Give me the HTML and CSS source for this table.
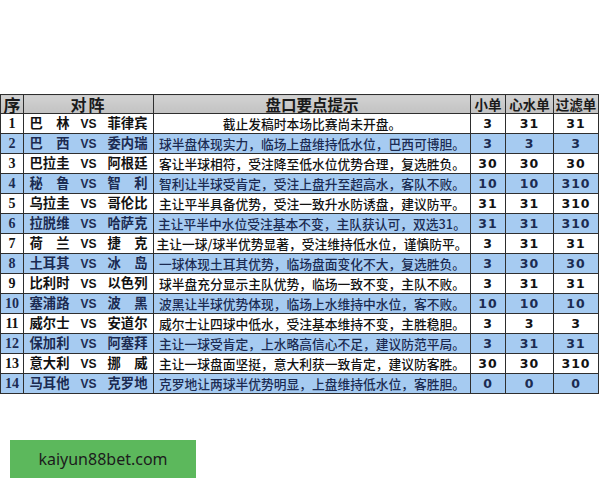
FILE: index.html
```html
<!DOCTYPE html>
<html lang="zh">
<head>
<meta charset="utf-8">
<link rel="stylesheet" href="styles.css">
</head>
<body>
<main class="page">
  <table class="odds">
    <colgroup>
      <col class="c-no"><col class="c-match"><col class="c-tip"><col class="c-n1"><col class="c-n2"><col class="c-n3">
    </colgroup>
    <thead>
      <tr>
        <th class="h-no">序</th>
        <th class="h-match">对阵</th>
        <th class="h-tip">盘口要点提示</th>
        <th class="h-small">小单</th>
        <th class="h-small">心水单</th>
        <th class="h-small">过滤单</th>
      </tr>
    </thead>
    <tbody>
      <tr><td class="no">1</td><td class="match"><span class="t1">巴　林</span><span class="vs">VS</span><span class="t2">菲律宾</span></td><td class="tip">截止发稿时本场比赛尚未开盘。</td><td class="num">3</td><td class="num">31</td><td class="num">31</td></tr>
      <tr class="blue"><td class="no">2</td><td class="match"><span class="t1">巴　西</span><span class="vs">VS</span><span class="t2">委内瑞</span></td><td class="tip">球半盘体现实力，临场上盘维持低水位，巴西可博胆。</td><td class="num">3</td><td class="num">3</td><td class="num">3</td></tr>
      <tr><td class="no">3</td><td class="match"><span class="t1">巴拉圭</span><span class="vs">VS</span><span class="t2">阿根廷</span></td><td class="tip">客让半球相符，受注降至低水位优势合理，复选胜负。</td><td class="num">30</td><td class="num">30</td><td class="num">30</td></tr>
      <tr class="blue"><td class="no">4</td><td class="match"><span class="t1">秘　鲁</span><span class="vs">VS</span><span class="t2">智　利</span></td><td class="tip">智利让半球受肯定，受注上盘升至超高水，客队不败。</td><td class="num">10</td><td class="num">10</td><td class="num">310</td></tr>
      <tr><td class="no">5</td><td class="match"><span class="t1">乌拉圭</span><span class="vs">VS</span><span class="t2">哥伦比</span></td><td class="tip">主让平半具备优势，受注一致升水防诱盘，建议防平。</td><td class="num">31</td><td class="num">31</td><td class="num">310</td></tr>
      <tr class="blue"><td class="no">6</td><td class="match"><span class="t1">拉脱维</span><span class="vs">VS</span><span class="t2">哈萨克</span></td><td class="tip">主让平半中水位受注基本不变，主队获认可，双选31。</td><td class="num">31</td><td class="num">31</td><td class="num">310</td></tr>
      <tr><td class="no">7</td><td class="match"><span class="t1">荷　兰</span><span class="vs">VS</span><span class="t2">捷　克</span></td><td class="tip">主让一球/球半优势显著，受注维持低水位，谨慎防平。</td><td class="num">3</td><td class="num">31</td><td class="num">31</td></tr>
      <tr class="blue"><td class="no">8</td><td class="match"><span class="t1">土耳其</span><span class="vs">VS</span><span class="t2">冰　岛</span></td><td class="tip">一球体现土耳其优势，临场盘面变化不大，复选胜负。</td><td class="num">3</td><td class="num">30</td><td class="num">30</td></tr>
      <tr><td class="no">9</td><td class="match"><span class="t1">比利时</span><span class="vs">VS</span><span class="t2">以色列</span></td><td class="tip">球半盘充分显示主队优势，临场一致不变，主队不败。</td><td class="num">3</td><td class="num">31</td><td class="num">31</td></tr>
      <tr class="blue"><td class="no">10</td><td class="match"><span class="t1">塞浦路</span><span class="vs">VS</span><span class="t2">波　黑</span></td><td class="tip">波黑让半球优势体现，临场上水维持中水位，客不败。</td><td class="num">10</td><td class="num">10</td><td class="num">10</td></tr>
      <tr><td class="no">11</td><td class="match"><span class="t1">威尔士</span><span class="vs">VS</span><span class="t2">安道尔</span></td><td class="tip">威尔士让四球中低水，受注基本维持不变，主胜稳胆。</td><td class="num">3</td><td class="num">3</td><td class="num">3</td></tr>
      <tr class="blue"><td class="no">12</td><td class="match"><span class="t1">保加利</span><span class="vs">VS</span><span class="t2">阿塞拜</span></td><td class="tip">主让一球受肯定，上水略高信心不足，建议防范平局。</td><td class="num">3</td><td class="num">31</td><td class="num">31</td></tr>
      <tr><td class="no">13</td><td class="match"><span class="t1">意大利</span><span class="vs">VS</span><span class="t2">挪　威</span></td><td class="tip">主让一球盘面坚挺，意大利获一致肯定，建议防客胜。</td><td class="num">30</td><td class="num">30</td><td class="num">310</td></tr>
      <tr class="blue"><td class="no">14</td><td class="match"><span class="t1">马耳他</span><span class="vs">VS</span><span class="t2">克罗地</span></td><td class="tip">克罗地让两球半优势明显，上盘维持低水位，客胜胆。</td><td class="num">0</td><td class="num">0</td><td class="num">0</td></tr>
    </tbody>
  </table>
  <div class="badge">kaiyun88bet.com</div>
</main>
</body>
</html>
```

FILE: styles.css
```css
html, body {
  margin: 0;
  padding: 0;
  background: #ffffff;
}

.page {
  padding-top: 94px;
  font-family: "Noto Sans CJK SC", "Noto Sans", sans-serif;
}

.odds {
  width: 599px;
  border-collapse: collapse;
  table-layout: fixed;
  color: #121212;
}

.c-no { width: 23px; }
.c-match { width: 130px; }
.c-tip { width: 317px; }
.c-n1 { width: 35px; }
.c-n2 { width: 48px; }
.c-n3 { width: 45px; }

.odds th,
.odds td {
  border: 1px solid #2e2e2e;
  padding: 0;
  text-align: center;
  white-space: nowrap;
  line-height: 17px;
}

.odds thead tr {
  height: 19px;
}

.odds th {
  background: linear-gradient(#d2d2d2, #c2c2c2);
  font-weight: 700;
  color: #1a1a1a;
}

.h-no {
  font-size: 17px;
}

.h-match {
  font-size: 16px;
  letter-spacing: 2px;
}

.h-tip {
  font-size: 15.5px;
}

.h-small {
  font-size: 13.5px;
}

.odds tbody tr {
  height: 19.4px;
}

.odds tbody tr.blue td {
  background: #a6cbf1;
  color: #1b2b52;
}

.no {
  font-family: "Liberation Serif", serif;
  font-weight: 700;
  font-size: 14px;
}

.match {
  font-weight: 700;
  font-size: 13.3px;
}

.match .t1,
.match .t2 {
  display: inline-block;
  width: 40px;
}

.match .vs {
  display: inline-block;
  width: 38px;
  font-family: "Liberation Sans", sans-serif;
  font-size: 12px;
  font-weight: 700;
}

.tip {
  font-size: 12.75px;
  font-weight: 500;
}

.num {
  font-family: "DejaVu Sans", sans-serif;
  font-weight: 700;
  font-size: 12.5px;
  letter-spacing: 1px;
}

.badge {
  margin: 46px 0 0 10px;
  width: 186px;
  height: 38px;
  background: #5cb85c;
  color: #1c1c1c;
  font-family: "Noto Sans", sans-serif;
  font-size: 16px;
  display: flex;
  align-items: center;
  justify-content: center;
}
```
